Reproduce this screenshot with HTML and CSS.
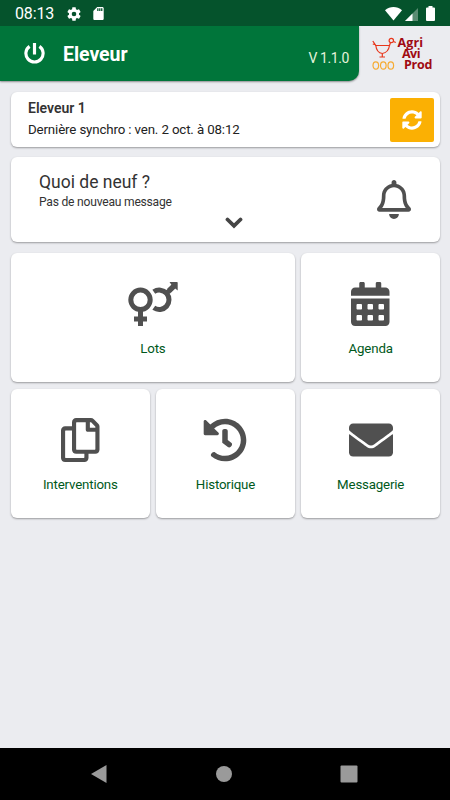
FILE: index.html
```html
<!DOCTYPE html>
<html lang="fr">
<head>
    <meta charset="UTF-8">
    <meta name="viewport" content="width=device-width, initial-scale=1.0">
    <title>Eleveur</title>
    <link rel="stylesheet" href="styles.css">
</head>
<body>

    <!-- BARRE DE STATUT -->
    <div class="status-bar">
        <span class="clock">08:13</span>
        <svg class="status-gear" viewBox="2 2 20 20"><path d="M19.14 12.94c.04-.3.06-.61.06-.94 0-.32-.02-.64-.07-.94l2.03-1.58c.18-.14.23-.41.12-.61l-1.92-3.32c-.12-.22-.37-.29-.59-.22l-2.39.96c-.5-.38-1.03-.7-1.62-.94l-.36-2.54c-.04-.24-.24-.41-.48-.41h-3.84c-.24 0-.43.17-.47.41l-.36 2.54c-.59.24-1.13.57-1.62.94l-2.39-.96c-.22-.08-.47 0-.59.22L2.74 8.87c-.12.21-.08.47.12.61l2.03 1.58c-.05.3-.09.63-.09.94s.02.64.07.94l-2.03 1.58c-.18.14-.23.41-.12.61l1.92 3.32c.12.22.37.29.59.22l2.39-.96c.5.38 1.03.7 1.62.94l.36 2.54c.05.24.24.41.48.41h3.84c.24 0 .44-.17.47-.41l.36-2.54c.59-.24 1.13-.56 1.62-.94l2.39.96c.22.08.47 0 .59-.22l1.92-3.32c.12-.22.07-.47-.12-.61l-2.01-1.58zM12 15.3a3.3 3.3 0 1 1 0-6.6 3.3 3.3 0 0 1 0 6.6z"/></svg>
        <svg class="status-card" viewBox="4 2 16 20"><path d="M18 2h-8L4.02 8 4 20c0 1.1.9 2 2 2h12c1.1 0 2-.9 2-2V4c0-1.1-.9-2-2-2zm-6 6h-2V4h2v4zm3 0h-2V4h2v4zm3 0h-2V4h2v4z"/></svg>
        <svg class="status-wifi" viewBox="0 0 17 14"><path d="M0 3.2C5-1 12-1 17 3.2L8.500 13.600z"/></svg>
        <svg class="status-signal" viewBox="0 0 13 13"><path class="dim" d="M13 0v13H0z"/><path d="M7.500 5.500V13H0z"/></svg>
        <svg class="status-battery" viewBox="0 0 9 15"><path d="M2.500 0h4v1.500H8q1 0 1 1V14q0 1-1 1H1q-1 0-1-1V2.500q0-1 1-1h1.500z"/></svg>
    </div>

    <!-- EN-TETE -->
    <header class="header">
        <div class="toolbar">
            <svg class="power" viewBox="0 0 20 20"><path d="M10 0v11M5.300 3.200A8.200 8.200 0 1 0 14.700 3.200"/></svg>
            <h1>Eleveur</h1>
            <span class="version">V 1.1.0</span>
        </div>
        <svg class="logo" viewBox="0 0 64 38">
            <g class="hen">
                <path d="M3 10.500h14.500M.8 6l3 4.500c.5 4.500 3 7.500 6.500 8 3.500-.5 6.500-3.500 7.200-8l1-3M10.300 18.500v3.500M7.500 22h5.500M.8 9l2.500.8M21.500 6.500l2.300 1"/>
                <circle cx="19.300" cy="5.500" r="2.200"/>
            </g>
            <g class="eggs">
                <ellipse cx="3.800" cy="30.500" rx="2.800" ry="3.700"/>
                <ellipse cx="11.300" cy="30.500" rx="2.800" ry="3.700"/>
                <ellipse cx="18.800" cy="30.500" rx="2.800" ry="3.700"/>
            </g>
            <text x="25.500" y="12.300" textLength="25.500">Agri</text>
            <text x="30" y="23.200" textLength="18.500">Avi</text>
            <text x="32" y="34.100" textLength="28.500">Prod</text>
        </svg>
    </header>

    <main class="content">
        <section class="card account">
            <div>
                <h2>Eleveur 1</h2>
                <p>Dernière synchro : ven. 2 oct. à 08:12</p>
            </div>
            <button class="sync" aria-label="Synchroniser">
                <svg viewBox="0 0 512 512"><path d="M370.72 133.28C339.458 104.008 298.888 87.962 255.848 88c-77.458.068-144.328 53.178-162.791 126.850-1.344 5.363-6.122 9.150-11.651 9.150H24.103c-7.498 0-13.194-6.807-11.807-14.176C33.933 94.924 134.813 8 256 8c66.448 0 126.791 26.136 171.315 68.685L463.030 40.970C478.149 25.851 504 36.559 504 57.941V192c0 13.255-10.745 24-24 24H345.941c-21.382 0-32.090-25.851-16.971-40.971l41.750-41.749zM32 296h134.059c21.382 0 32.090 25.851 16.971 40.971l-41.750 41.750c31.262 29.273 71.835 45.319 114.876 45.280 77.418-.070 144.315-53.144 162.787-126.849 1.344-5.363 6.122-9.150 11.651-9.150h57.304c7.498 0 13.194 6.807 11.807 14.176C478.067 417.076 377.187 504 256 504c-66.448 0-126.791-26.136-171.315-68.685L48.970 471.030C33.851 486.149 8 475.441 8 454.059V320c0-13.255 10.745-24 24-24z"/></svg>
            </button>
        </section>

        <section class="card news">
            <div class="news-text">
                <h2>Quoi de neuf ?</h2>
                <p>Pas de nouveau message</p>
            </div>
            <svg class="bell" viewBox="0 0 448 512"><path d="M439.39 362.29c-19.32-20.76-55.47-51.99-55.47-154.29 0-77.7-54.48-139.9-127.94-155.16V32c0-17.67-14.32-32-31.98-32s-31.98 14.33-31.98 32v20.84C118.56 68.1 64.08 130.3 64.08 208c0 102.3-36.15 133.53-55.47 154.29-6 6.45-8.66 14.16-8.61 21.71.11 16.4 12.98 32 32.1 32h383.8c19.12 0 32-15.6 32.1-32 .05-7.55-2.61-15.27-8.61-21.71zM67.53 368c21.22-27.97 44.42-74.33 44.53-159.42 0-.2-.06-.38-.06-.58 0-61.86 50.14-112 112-112s112 50.14 112 112c0 .2-.06.38-.06.58.11 85.1 23.31 131.46 44.53 159.42H67.53zM224 512c35.32 0 63.97-28.65 63.97-64H160.03c0 35.35 28.65 64 63.97 64z"/></svg>
            <svg class="chevron" viewBox="0 0 18 12"><path d="M2.500 2.500 9 8.800l6.500-6.300"/></svg>
        </section>

        <!-- MENU -->
        <nav class="menu">
            <a class="card tile wide">
                <svg class="gender" viewBox="0 0 50 44">
                    <circle cx="12.500" cy="17.800" r="9.700"/>
                    <path d="M12.500 28v16M6 37h13M25.800 9.800A9.700 9.700 0 1 1 25.800 25.800M38 12l8-8"/>
                    <path class="tip" d="M41.500 0H49q.7 0 .7.700V8.500L47.200 6.500 43 10.500 39.200 6.700 43.400 2.700z"/>
                </svg>
                <span>Lots</span>
            </a>
            <a class="card tile">
                <svg viewBox="0 0 448 512"><path d="M0 464c0 26.500 21.500 48 48 48h352c26.500 0 48-21.500 48-48V192H0v272zm320-196c0-6.600 5.400-12 12-12h40c6.600 0 12 5.400 12 12v40c0 6.600-5.400 12-12 12h-40c-6.600 0-12-5.400-12-12v-40zm0 128c0-6.600 5.400-12 12-12h40c6.600 0 12 5.400 12 12v40c0 6.600-5.400 12-12 12h-40c-6.600 0-12-5.400-12-12v-40zM192 268c0-6.600 5.400-12 12-12h40c6.600 0 12 5.400 12 12v40c0 6.600-5.400 12-12 12h-40c-6.600 0-12-5.400-12-12v-40zm0 128c0-6.600 5.400-12 12-12h40c6.600 0 12 5.400 12 12v40c0 6.600-5.400 12-12 12h-40c-6.600 0-12-5.400-12-12v-40zM64 268c0-6.600 5.400-12 12-12h40c6.600 0 12 5.400 12 12v40c0 6.600-5.400 12-12 12H76c-6.600 0-12-5.400-12-12v-40zm0 128c0-6.600 5.400-12 12-12h40c6.600 0 12 5.400 12 12v40c0 6.600-5.400 12-12 12H76c-6.600 0-12-5.400-12-12v-40zM400 64h-48V16c0-8.800-7.200-16-16-16h-32c-8.800 0-16 7.200-16 16v48H160V16c0-8.800-7.200-16-16-16h-32c-8.800 0-16 7.200-16 16v48H48C21.500 64 0 85.500 0 112v48h448v-48c0-26.500-21.500-48-48-48z"/></svg>
                <span>Agenda</span>
            </a>
            <a class="card tile">
                <svg viewBox="0 0 448 512"><path d="M433.941 65.941l-51.882-51.882A48 48 0 0 0 348.118 0H176c-26.510 0-48 21.490-48 48v48H48c-26.510 0-48 21.490-48 48v320c0 26.510 21.490 48 48 48h224c26.510 0 48-21.490 48-48v-48h80c26.510 0 48-21.490 48-48V99.882a48 48 0 0 0-14.059-33.941zM266 464H54a6 6 0 0 1-6-6V150a6 6 0 0 1 6-6h74v224c0 26.510 21.490 48 48 48h96v42a6 6 0 0 1-6 6zm128-96H182a6 6 0 0 1-6-6V54a6 6 0 0 1 6-6h106v88c0 13.255 10.745 24 24 24h88v202a6 6 0 0 1-6 6zm6-256h-64V48h9.632c1.591 0 3.117.632 4.243 1.757l48.368 48.368a6 6 0 0 1 1.757 4.243V112z"/></svg>
                <span>Interventions</span>
            </a>
            <a class="card tile">
                <svg viewBox="0 0 512 512"><path d="M504 255.531c.253 136.640-111.180 248.372-247.820 248.468-59.015.042-113.223-20.530-155.822-54.911-11.077-8.940-11.905-25.541-1.839-35.607l11.267-11.267c8.609-8.609 22.353-9.551 31.891-1.984C173.062 425.135 212.781 440 256 440c101.705 0 184-82.311 184-184 0-101.705-82.311-184-184-184-48.814 0-93.149 18.969-126.068 49.932l50.754 50.754c10.080 10.080 2.941 27.314-11.313 27.314H24c-8.837 0-16-7.163-16-16V38.627c0-14.254 17.234-21.393 27.314-11.314l49.372 49.372C129.209 34.136 189.552 8 256 8c136.810 0 247.747 110.780 248 247.531zm-180.912 78.784l9.823-12.630c8.138-10.463 6.253-25.542-4.210-33.679L288 256.349V152c0-13.255-10.745-24-24-24h-16c-13.255 0-24 10.745-24 24v135.651l65.409 50.874c10.463 8.137 25.541 6.253 33.679-4.210z"/></svg>
                <span>Historique</span>
            </a>
            <a class="card tile">
                <svg viewBox="0 0 512 512"><path d="M502.300 190.800c3.900-3.100 9.700-.2 9.700 4.700V400c0 26.500-21.500 48-48 48H48c-26.500 0-48-21.500-48-48V195.600c0-5 5.700-7.800 9.700-4.700 22.400 17.400 52.100 39.500 154.100 113.600 21.100 15.400 56.700 47.800 92.200 47.600 35.700.3 72-32.800 92.300-47.600 102-74.100 131.600-96.300 154-113.700zM256 320c23.200.4 56.600-29.200 73.400-41.400 132.700-96.300 142.800-104.700 173.400-128.700 5.800-4.500 9.200-11.500 9.200-18.900v-19c0-26.500-21.500-48-48-48H48c-26.500 0-48 21.500-48 48v19c0 7.400 3.400 14.300 9.200 18.900 30.600 23.900 40.700 32.400 173.400 128.700 16.800 12.200 50.200 41.800 73.400 41.400z"/></svg>
                <span>Messagerie</span>
            </a>
        </nav>
    </main>

    <!-- BOUTONS ANDROID -->
    <footer class="android-nav">
        <svg viewBox="0 0 18 18"><path d="M16.500 0v18L1 9z"/></svg>
        <svg viewBox="0 0 18 18"><circle cx="9" cy="9" r="8"/></svg>
        <svg viewBox="0 0 18 18"><rect x=".5" y=".5" width="17" height="17" rx="1"/></svg>
    </footer>

</body>
</html>
```
FILE: styles.css
```css
* {
    box-sizing: border-box;
}

body {
    font-family: Roboto, "Liberation Sans", sans-serif;
    background-color: #ebecf0;
    color: #333;
    display: flex;
    flex-direction: column;
    height: 100vh;
    margin: 0;
    overflow: hidden;
}

h1, h2, p {
    margin: 0;
}

svg {
    display: block;
    flex: none;
}

.status-bar {
    display: flex;
    align-items: center;
    height: 26px;
    padding: 1px 15px 0 15px;
    background-color: #05532c;
    color: white;
}

.status-bar svg {
    fill: white;
}

.clock {
    font-size: 16px;
    letter-spacing: -0.15px;
    width: 52px;
}

.status-gear {
    width: 14px;
    height: 14px;
}

.status-card {
    width: 11px;
    height: 13px;
    margin-left: 12px;
}

.status-wifi {
    width: 17px;
    height: 14px;
    margin-left: auto;
}

.status-signal {
    width: 13px;
    height: 13px;
    margin: 1px 8px 0 3px;
}

.status-signal .dim {
    fill: #5a8c72;
}

.status-battery {
    width: 9px;
    height: 15px;
}

.header {
    display: flex;
    height: 55px;
}

.toolbar {
    display: flex;
    align-items: center;
    width: 359px;
    padding: 0 10px 0 24px;
    background-color: #00753a;
    color: white;
    border-bottom-right-radius: 10px;
    box-shadow: 0 1px 2px rgba(0, 0, 0, 0.4);
    clip-path: inset(0 -4px -4px 0);
}

.power {
    width: 21px;
    height: 21px;
    fill: none;
    stroke: white;
    stroke-width: 3;
}

.toolbar h1 {
    margin: 2px 0 0 18px;
    font-size: 19.5px;
    font-weight: 700;
    letter-spacing: -0.05px;
}

.version {
    margin: 9px 0 0 auto;
    font-size: 14px;
    letter-spacing: -0.4px;
    color: #e4f3dc;
}

.logo {
    width: 64px;
    height: 38px;
    margin: 9px 0 0 13px;
}

.logo text {
    font: 700 12.5px "Open Sans", "Noto Sans", sans-serif;
    fill: #a00a12;
}

.hen {
    fill: none;
    stroke: #e8371c;
    stroke-width: 1.2;
}

.eggs {
    fill: none;
    stroke: #f6ab32;
    stroke-width: 1.2;
}

.content {
    flex: 1;
    padding: 11px 10px 0 11px;
}

.card {
    background-color: white;
    border-radius: 6px;
    box-shadow: 0 1px 2px rgba(0, 0, 0, 0.35);
}

.account {
    display: flex;
    justify-content: space-between;
    height: 55px;
    padding: 6px 6px 0 17px;
}

.account h2 {
    margin-top: 1px;
    font-size: 14px;
    line-height: 18px;
    font-weight: 600;
}

.account p {
    margin-top: 4px;
    font-size: 13.3px;
    line-height: 18px;
    letter-spacing: -0.14px;
    color: #222;
}

.sync {
    display: flex;
    align-items: center;
    justify-content: center;
    width: 44px;
    height: 44px;
    padding: 0;
    background-color: #fbb003;
    border: none;
    border-radius: 2px;
}

.sync svg {
    width: 20px;
    height: 20px;
    fill: white;
}

.news {
    display: grid;
    grid-template-columns: 1fr auto;
    align-content: start;
    height: 85px;
    margin-top: 10px;
    padding: 13px 29px 0 28px;
}

.news h2 {
    font-size: 17.5px;
    line-height: 24px;
    font-weight: 400;
}

.news p {
    font-size: 12.1px;
    line-height: 16px;
    letter-spacing: -0.22px;
}

.bell {
    width: 34px;
    height: 39px;
    margin-top: 10px;
    fill: #505050;
}

.chevron {
    grid-column: 1 / 3;
    justify-self: center;
    width: 18px;
    height: 12px;
    margin: -2px 0 0 17px;
    fill: none;
    stroke: #454545;
    stroke-width: 3.8;
    stroke-linecap: round;
}

.menu {
    display: grid;
    grid-template-columns: repeat(3, 1fr);
    grid-auto-rows: 129px;
    gap: 7px 6.5px;
    margin-top: 11px;
}

.tile {
    display: flex;
    flex-direction: column;
    align-items: center;
    gap: 14px;
    padding-top: 29px;
    font-size: 13.3px;
    letter-spacing: -0.18px;
    color: #00591b;
}

.wide {
    grid-column: span 2;
}

.tile svg {
    height: 44px;
    fill: #505050;
}

.tile span {
    line-height: 18px;
}

.tile .gender {
    width: 50px;
    fill: none;
    stroke: #505050;
    stroke-width: 5;
}

.gender .tip {
    fill: #505050;
    stroke: none;
}

.android-nav {
    display: flex;
    align-items: center;
    justify-content: space-between;
    height: 52px;
    padding: 0 92px 0 90px;
    background-color: black;
}

.android-nav svg {
    width: 18px;
    height: 18px;
    fill: #9a9a9a;
}
```
